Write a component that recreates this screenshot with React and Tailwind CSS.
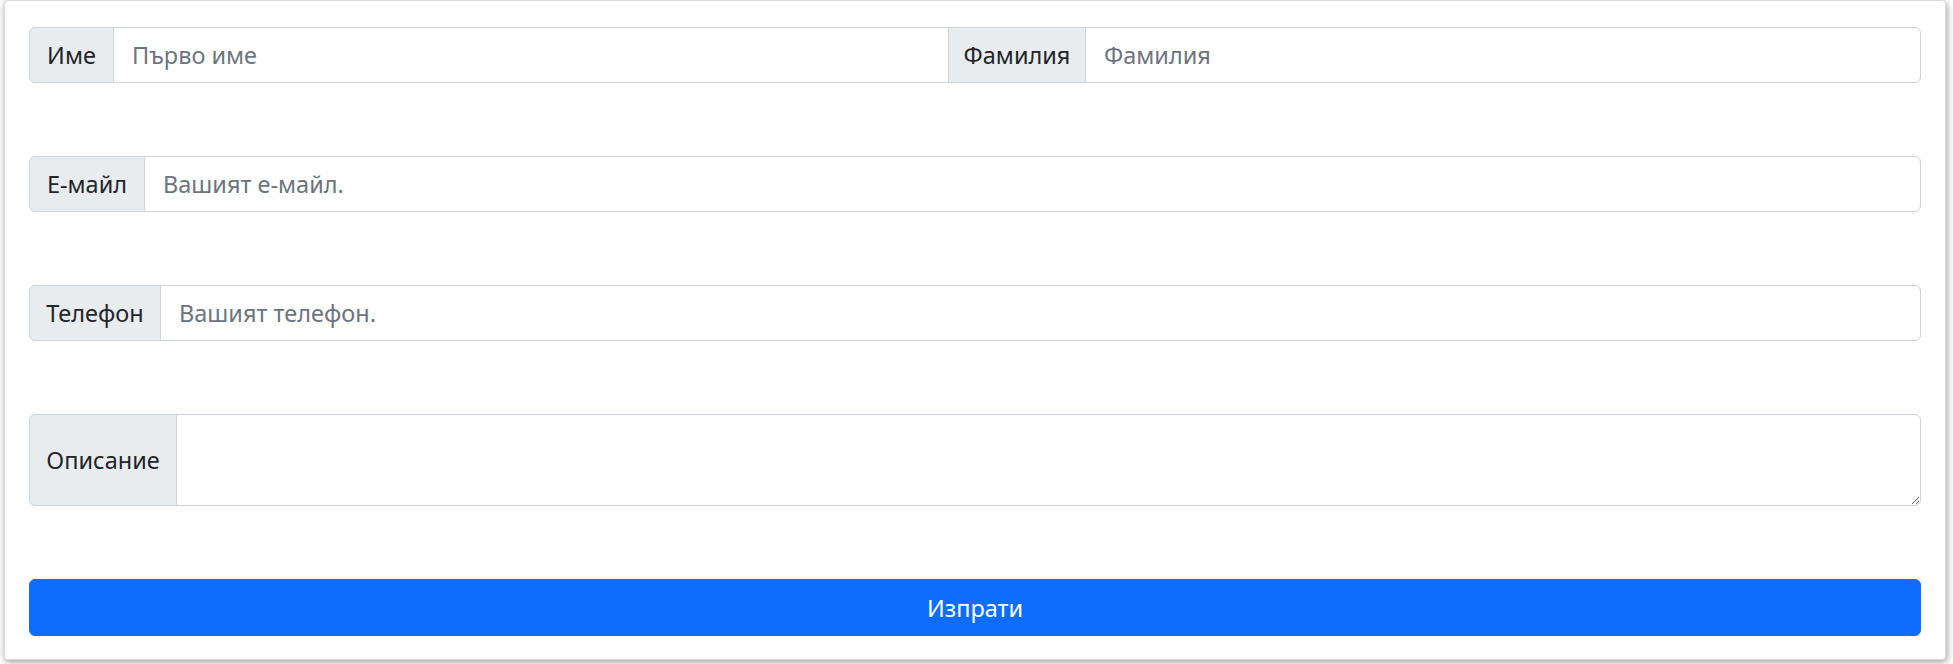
import React from "react";

// Форма за контакт – Bootstrap-подобни input групи
const Label = ({ children, w }) => (
  <span
    className={`flex items-center justify-center shrink-0 bg-[#e9ecef] border border-[#ced4da] text-[#212529] ${w}`}
  >
    {children}
  </span>
);

const inputCls =
  "flex-1 min-w-0 h-full bg-white border border-[#ced4da] px-[18px] text-[#212529] placeholder:text-[#6c757d] outline-none";

const App = () => {
  return (
    <div className="min-h-screen bg-white font-['Noto_Sans',sans-serif] text-[23.5px] leading-[36px]">
      <div className="ml-[4px] w-[1942px] bg-white border border-[#dcdcdc] rounded-[4px] shadow-[1px_2px_7px_rgba(0,0,0,0.4)] px-[24px] pt-[26px] pb-[23px]">
        <form onSubmit={(e) => e.preventDefault()}>
          {/* Име + Фамилия */}
          <div className="flex h-[56px] mb-[73px]">
            <Label w="w-[85px] rounded-l-[6px]">Име</Label>
            <input className={`${inputCls} -ml-px`} placeholder="Първо име" />
            <Label w="w-[138px] -ml-px">Фамилия</Label>
            <input
              className={`${inputCls} -ml-px rounded-r-[6px]`}
              placeholder="Фамилия"
            />
          </div>

          {/* Е-майл */}
          <div className="flex h-[56px] mb-[73px]">
            <Label w="w-[116px] rounded-l-[6px]">Е-майл</Label>
            <input
              type="email"
              className={`${inputCls} -ml-px rounded-r-[6px]`}
              placeholder="Вашият е-майл."
            />
          </div>

          {/* Телефон */}
          <div className="flex h-[56px] mb-[73px]">
            <Label w="w-[132px] rounded-l-[6px]">Телефон</Label>
            <input
              className={`${inputCls} -ml-px rounded-r-[6px]`}
              placeholder="Вашият телефон."
            />
          </div>

          {/* Описание */}
          <div className="flex h-[92px] mb-[73px]">
            <Label w="w-[148px] rounded-l-[6px]">Описание</Label>
            <textarea
              rows={2}
              className="flex-1 min-w-0 -ml-px bg-white border border-[#ced4da] rounded-r-[6px] px-[18px] py-[9px] text-[#212529] outline-none resize-y"
            />
          </div>

          <button
            type="submit"
            className="w-full h-[57px] bg-[#0d6efd] text-white rounded-[6px] border border-[#0d6efd]"
          >
            Изпрати
          </button>
        </form>
      </div>
    </div>
  );
};

export default App;
